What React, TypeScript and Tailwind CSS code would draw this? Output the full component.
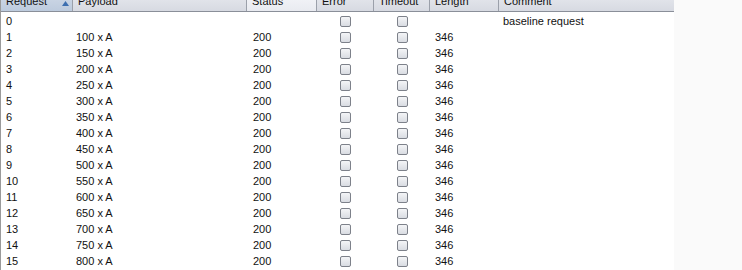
import React from 'react'

const cols = [
  { key: 'request', label: 'Request', w: 72 },
  { key: 'payload', label: 'Payload', w: 174 },
  { key: 'status', label: 'Status', w: 70 },
  { key: 'error', label: 'Error', w: 57 },
  { key: 'timeout', label: 'Timeout', w: 56 },
  { key: 'length', label: 'Length', w: 69 },
  { key: 'comment', label: 'Comment', w: 176 },
]

const rows = Array.from({ length: 16 }, (_, i) => ({
  id: i,
  payload: i === 0 ? '' : `${50 + i * 50} x A`,
  status: i === 0 ? '' : '200',
  length: i === 0 ? '' : '346',
  comment: i === 0 ? 'baseline request' : '',
}))

const Check = () => (
  <span className="block h-[11px] w-[11px] rounded-[2px] border border-[#7d818a] bg-gradient-to-b from-[#f4f5f7] to-[#d9dce2]" />
)

export default function App() {
  return (
    <div className="flex h-[270px] w-[742px] overflow-hidden bg-[#fafafa] font-['Liberation_Sans',Arial,sans-serif] text-[11px] text-[#111]">
      <div className="flex w-[674px] flex-col border-l border-[#9a9a9a] bg-white">
        {/* header, top half scrolled away */}
        <div className="flex h-[12px] shrink-0 overflow-hidden border-b border-[#8a8f99]">
          {cols.map((c, i) => (
            <div
              key={c.key}
              style={{ width: c.w }}
              className={
                'relative -mt-[9px] flex h-[21px] shrink-0 items-center border-r border-[#9ba0aa] pl-[5px] ' +
                (i === 0
                  ? 'bg-gradient-to-b from-[#d2dbe8] to-[#bccadd]'
                  : i === 2
                    ? 'bg-gradient-to-b from-[#f6f7fa] to-[#e8eaf0]'
                    : 'bg-gradient-to-b from-[#e9ebf0] to-[#d6d9e1]')
              }
            >
              {c.label}
              {i === 0 && (
                <svg className="absolute left-[61px] top-[10px]" width="7" height="5" viewBox="0 0 7 5">
                  <path d="M3.5 0L7 5H0z" fill="#3d6fb0" />
                </svg>
              )}
            </div>
          ))}
        </div>
        <div className="flex flex-col pt-[1px]">
          {rows.map(r => (
            <div key={r.id} className="flex h-[16px] shrink-0 items-center leading-[16px]">
              <div className="w-[72px] shrink-0 pl-[5px]">{r.id}</div>
              <div className="w-[174px] shrink-0 pl-[3px]">{r.payload}</div>
              <div className="w-[70px] shrink-0 pl-[6px]">{r.status}</div>
              <div className="flex w-[57px] shrink-0 justify-center">
                <Check />
              </div>
              <div className="flex w-[56px] shrink-0 justify-center">
                <Check />
              </div>
              <div className="w-[69px] shrink-0 pl-[5px]">{r.length}</div>
              <div className="w-[176px] shrink-0 pl-[4px]">{r.comment}</div>
            </div>
          ))}
        </div>
      </div>
    </div>
  )
}
